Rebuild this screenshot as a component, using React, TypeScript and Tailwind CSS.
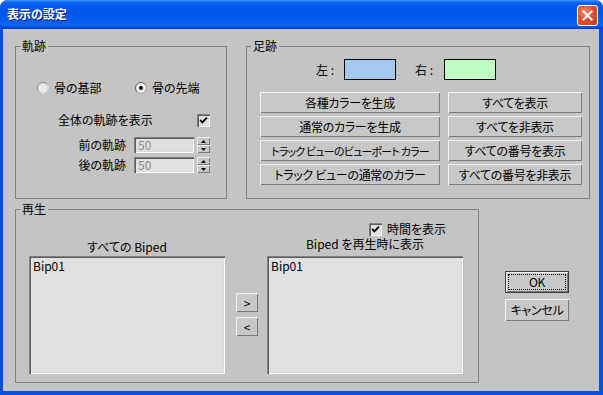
import type { ReactNode } from "react";

const raised = "bg-[#c8c8c8] shadow-[inset_1px_1px_0_#f2f2f2,inset_-1px_-1px_0_#7a7a7a]";
const sunken =
  "bg-[#e1e1e1] shadow-[inset_1px_1px_0_#808080,inset_2px_2px_0_#5c5c5c,inset_-1px_-1px_0_#ffffff,inset_-2px_-2px_0_#dcdcdc]";

const Group = ({
  label,
  className,
  children,
}: {
  label: string;
  className: string;
  children: ReactNode;
}) => (
  <fieldset className={`border border-[#808080] ${className}`}>
    <legend className="ml-[4px] px-[2px] text-[12px] leading-[14px]">{label}</legend>
    {children}
  </fieldset>
);

const Btn = ({ children, className = "" }: { children: ReactNode; className?: string }) => (
  <div
    className={`flex items-center justify-center whitespace-nowrap leading-[14px] tracking-[-0.3px] ${raised} ${className}`}
  >
    {children}
  </div>
);

const Radio = ({ checked }: { checked?: boolean }) => (
  <svg width="12" height="12" viewBox="0 0 12 12">
    <circle cx="6" cy="6" r="5.5" fill={checked ? "#f2f2f2" : "#e8e8e8"} stroke={checked ? "#5a5a5a" : "#8c8c8c"} />
    <path d="M9.9 2.1 A5.5 5.5 0 0 1 2.1 9.9" fill="none" stroke={checked ? "#c8c8c8" : "#e0e0e0"} strokeWidth="1" />
    {checked && <circle cx="6" cy="6" r="2" fill="#000" />}
  </svg>
);

const Check = () => (
  <div className={`h-[13px] w-[13px] ${sunken}`}>
    <svg width="13" height="13" viewBox="0 0 13 13">
      <polyline points="3.2,6 5.4,8.3 10,3.6" fill="none" stroke="#000" strokeWidth="1.9" />
    </svg>
  </div>
);

const Spinner = () => (
  <div className="ml-[3px] flex h-[16px] w-[13px] flex-col">
    <div className={`flex h-[8px] items-center justify-center ${raised}`}>
      <svg width="5" height="3" viewBox="0 0 5 3">
        <polygon points="2.5,0 5,3 0,3" fill="#000" />
      </svg>
    </div>
    <div className={`flex h-[8px] items-center justify-center ${raised}`}>
      <svg width="5" height="3" viewBox="0 0 5 3">
        <polygon points="0,0 5,0 2.5,3" fill="#000" />
      </svg>
    </div>
  </div>
);

const SpinRow = ({ label, className }: { label: string; className: string }) => (
  <div className={`flex h-[16px] items-center ${className}`}>
    <span className="w-[110px] text-right">{label}</span>
    <div className={`ml-[8px] h-[16px] w-[60px] pl-[4px] leading-[16px] text-[#8a8a8a] ${sunken}`}>50</div>
    <Spinner />
  </div>
);

const List = () => (
  <div className={`h-[118px] w-[196px] px-[4px] pt-[3px] leading-[14px] ${sunken}`}>Bip01</div>
);

const App = () => {
  return (
    <div className="flex h-[395px] w-[603px] flex-col overflow-hidden rounded-t-[8px] bg-[#0a4ee0] font-['Noto_Sans_CJK_JP',sans-serif] text-[12px] text-black [font-feature-settings:'palt']">
      {/* title bar */}
      <div className="flex h-[29px] items-start justify-between bg-[linear-gradient(to_bottom,#3d95ff_0%,#0a5fef_10%,#0055ea_45%,#0a63f5_85%,#0053e6_93%,#0033cc_100%)] pr-[5px]">
        <span className="ml-[7px] mt-[6px] text-[12px] font-bold leading-[16px] text-white [text-shadow:1px_1px_0_#0a1a70]">
          表示の設定
        </span>
        <div className="mt-[5px] flex h-[21px] w-[21px] items-center justify-center rounded-[3px] border border-white bg-[radial-gradient(circle_at_35%_30%,#f08a6a_0%,#e0532c_45%,#c23a10_100%)]">
          <svg width="11" height="11" viewBox="0 0 11 11">
            <path d="M1.5 1.5 L9.5 9.5 M9.5 1.5 L1.5 9.5" stroke="#fff" strokeWidth="2" strokeLinecap="square" />
          </svg>
        </div>
      </div>

      {/* body */}
      <div className="mb-[4px] ml-[3px] mr-[4px] flex flex-1 flex-col bg-[#c4c4c4] pl-[12px] pt-[10px]">
        <div className="flex gap-[19px]">
          <Group label="軌跡" className="h-[160px] w-[212px]">
            <div className="mt-[28px] flex h-[14px] items-center pl-[21px]">
              <div className="flex w-[98px] items-center">
                <Radio />
                <span className="ml-[5px]">骨の基部</span>
              </div>
              <div className="flex items-center">
                <Radio checked />
                <span className="ml-[5px]">骨の先端</span>
              </div>
            </div>
            <div className="mt-[18px] flex h-[14px] items-center pl-[42px]">
              <span className="w-[139px]">全体の軌跡を表示</span>
              <Check />
            </div>
            <SpinRow label="前の軌跡" className="mt-[10px]" />
            <SpinRow label="後の軌跡" className="mt-[4px]" />
          </Group>

          <Group label="足跡" className="h-[160px] w-[344px]">
            <div className="mt-[6px] flex h-[21px] items-center pl-[69px]">
              <span className="w-[28px]">左 :</span>
              <div className="h-[21px] w-[52px] border border-black bg-[#a6caf0]" />
              <span className="ml-[19px] w-[29px]">右 :</span>
              <div className="h-[21px] w-[52px] border border-black bg-[#c0ffc0]" />
            </div>
            <div className="mt-[12px] grid grid-cols-[180px_134px] gap-x-[8px] gap-y-[3px] pl-[13px] text-[12px]">
              <Btn className="h-[21px]">各種カラーを生成</Btn>
              <Btn className="h-[21px]">すべてを表示</Btn>
              <Btn className="h-[21px]">通常のカラーを生成</Btn>
              <Btn className="h-[21px]">すべてを非表示</Btn>
              <Btn className="h-[21px] text-[11px] tracking-[-0.8px]">トラック ビューのビューポート カラー</Btn>
              <Btn className="h-[21px]">すべての番号を表示</Btn>
              <Btn className="h-[21px]">トラック ビューの通常のカラー</Btn>
              <Btn className="h-[21px]">すべての番号を非表示</Btn>
            </div>
          </Group>
        </div>

        <div className="mt-[3px] flex">
          <Group label="再生" className="h-[181px] w-[464px]">
            <div className="mt-[6px] flex h-[14px] items-center gap-[5px] pl-[353px]">
              <Check />
              <span>時間を表示</span>
            </div>
            <div className="flex pl-[13px]">
              <div className="flex w-[196px] flex-col">
                <span className="mt-[4px] h-[14px] text-center leading-[14px]">すべての Biped</span>
                <div className="mt-[2px]">
                  <List />
                </div>
              </div>
              <div className="ml-[11px] flex w-[22px] flex-col">
                <Btn className="mt-[57px] h-[19px]">&gt;</Btn>
                <Btn className="mt-[5px] h-[19px]">&lt;</Btn>
              </div>
              <div className="ml-[9px] flex w-[196px] flex-col">
                <span className="mt-[1px] h-[14px] text-center leading-[14px]">Biped を再生時に表示</span>
                <div className="mt-[5px]">
                  <List />
                </div>
              </div>
            </div>
          </Group>

          <div className="ml-[26px] mt-[69px] flex flex-col gap-[6px]">
            <Btn className="h-[22px] w-[64px] border border-[#404040] p-[2px]">
              <div className="flex h-full w-full items-center justify-center border border-dotted border-black">OK</div>
            </Btn>
            <Btn className="h-[22px] w-[64px]">キャンセル</Btn>
          </div>
        </div>
      </div>
    </div>
  );
};

export default App;
